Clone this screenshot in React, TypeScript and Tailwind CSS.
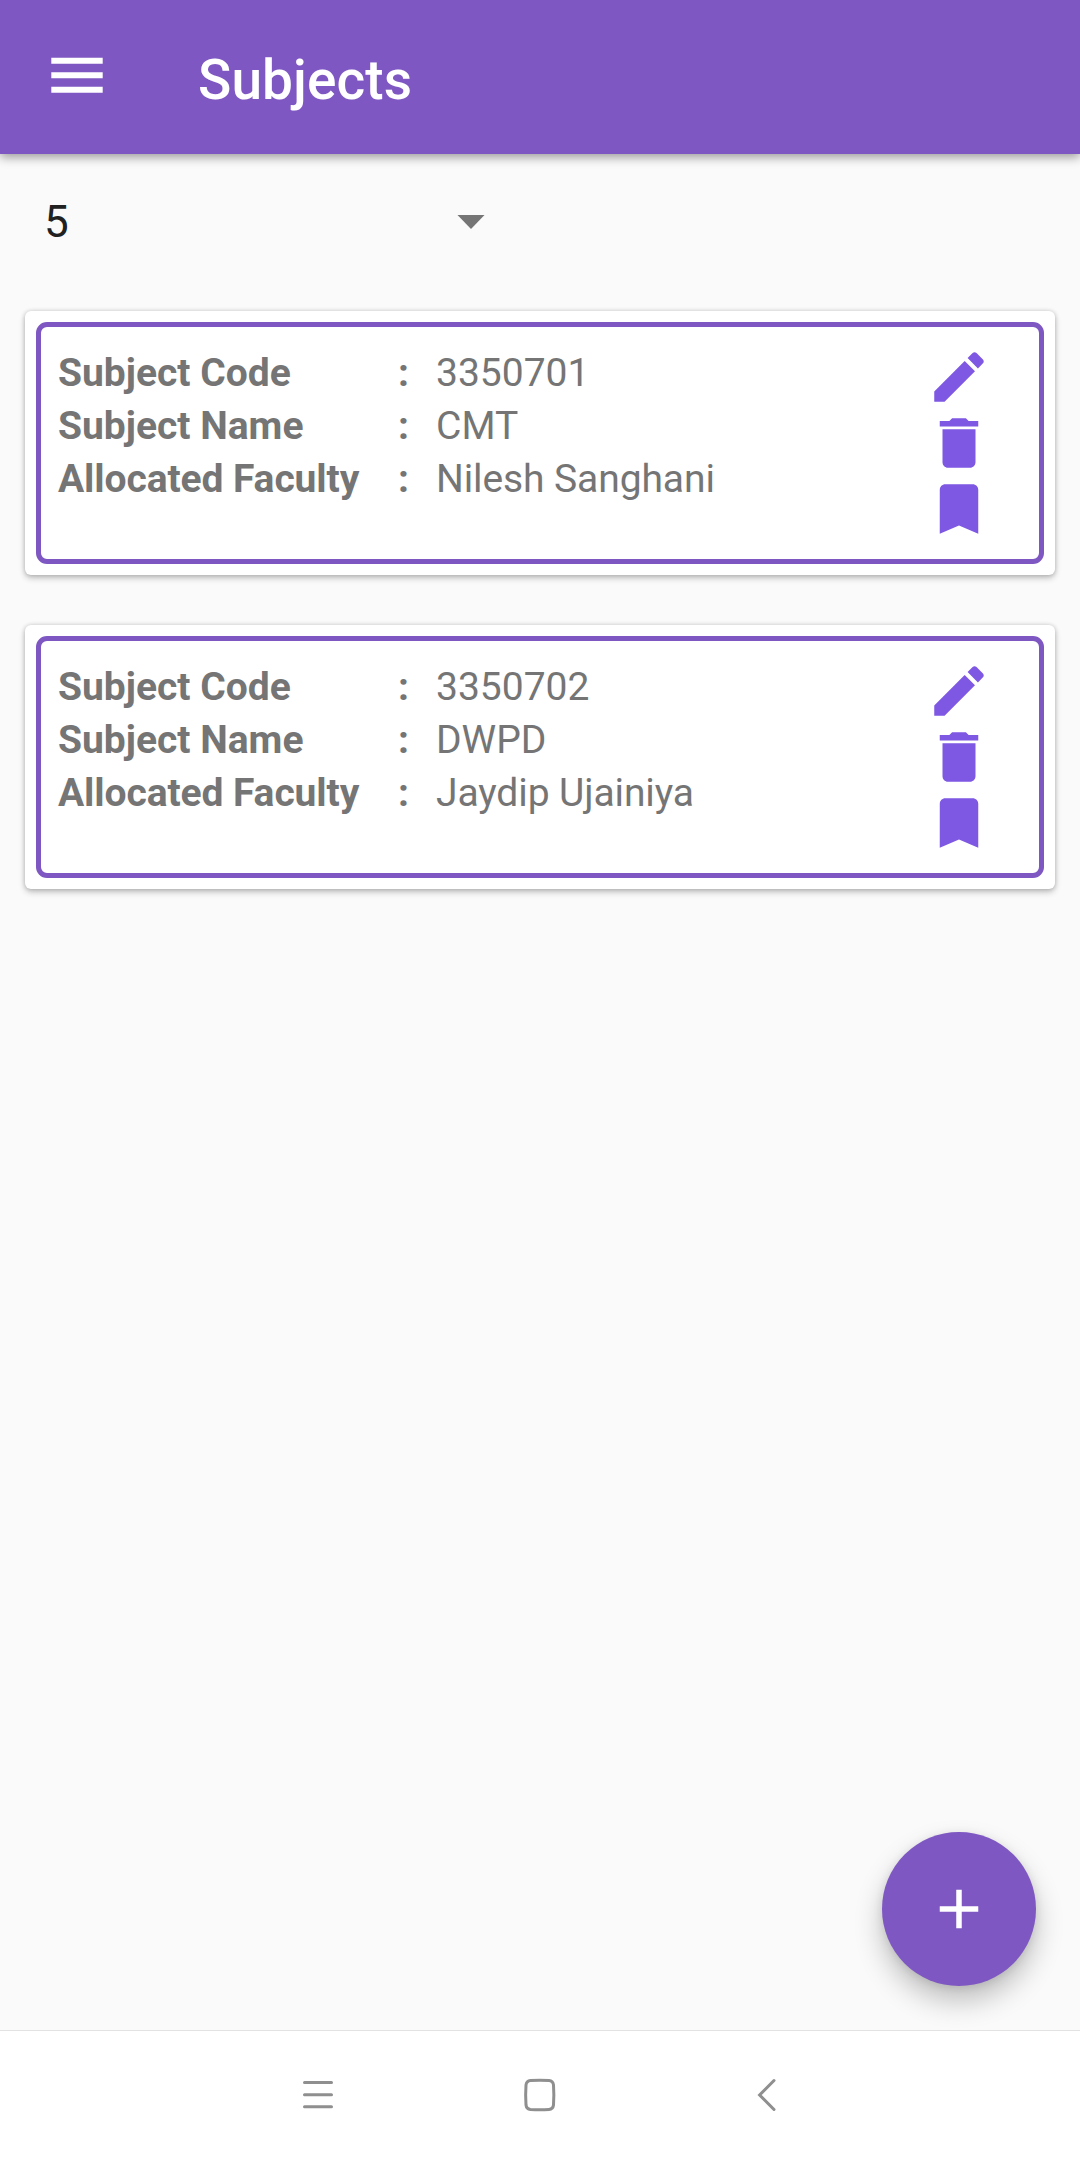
import React from "react";

type Subject = { code: string; name: string; faculty: string };

const subjects: Subject[] = [
  { code: "3350701", name: "CMT", faculty: "Nilesh Sanghani" },
  { code: "3350702", name: "DWPD", faculty: "Jaydip Ujainiya" },
];

const iconPaths = [
  {
    label: "Edit",
    d: "M3 17.25V21h3.75L17.81 9.94l-3.75-3.75L3 17.25zM20.71 7.04c.39-.39.39-1.02 0-1.41l-2.34-2.34c-.39-.39-1.02-.39-1.41 0l-1.83 1.83 3.75 3.75 1.83-1.83z",
  },
  {
    label: "Delete",
    d: "M6 19c0 1.1.9 2 2 2h8c1.1 0 2-.9 2-2V7H6v12zM19 4h-3.5l-1-1h-5l-1 1H5v2h14V4z",
  },
  {
    label: "Bookmark",
    d: "M17 3H7c-1.1 0-1.99.9-1.99 2L5 21l7-3 7 3V5c0-1.1-.9-2-2-2z",
  },
];

function Row({ label, value }: { label: string; value: string }) {
  return (
    <div className="flex h-[53px] items-center whitespace-nowrap">
      <span className="w-[340px] font-bold">{label}</span>
      <span className="w-[38px] font-bold">:</span>
      <span>{value}</span>
    </div>
  );
}

function SubjectCard({ subject }: { subject: Subject }) {
  return (
    <article className="h-[264px] rounded-[6px] bg-white p-[11px] shadow-[0_3px_6px_rgba(0,0,0,0.24),0_0_4px_rgba(0,0,0,0.16)]">
      <div className="flex h-full justify-between rounded-[11px] border-[5px] border-[#7e57c2] pt-[17px] pr-[47px] pl-[17px]">
        <div className="pt-[3px] text-[39px] text-[#757575]">
          <Row label="Subject Code" value={subject.code} />
          <Row label="Subject Name" value={subject.name} />
          <div className="tracking-[-0.1px]">
            <Row label="Allocated Faculty" value={subject.faculty} />
          </div>
        </div>
        <div className="flex flex-col">
          {iconPaths.map((icon) => (
            <button key={icon.label} aria-label={icon.label} className="size-[66px]">
              <svg viewBox="0 0 24 24" className="size-full fill-[#7e57e2]">
                <path d={icon.d} />
              </svg>
            </button>
          ))}
        </div>
      </div>
    </article>
  );
}

export default function App() {
  return (
    <div className="relative flex h-[2160px] w-[1080px] flex-col bg-[#fafafa] font-[Roboto,sans-serif]">
      <header className="flex h-[154px] shrink-0 items-center bg-[#7e57c2] pl-[44px] text-white shadow-[0_3px_10px_rgba(0,0,0,0.4)]">
        <button aria-label="Menu" className="w-[66px]">
          <svg viewBox="0 0 66 66" className="mt-[-5px] size-[66px] fill-white">
            <path d="M7.3 15.7h51.4v6H7.3zM7.3 30.2h51.4v6H7.3zM7.3 44.8h51.4v6H7.3z" />
          </svg>
        </button>
        <h1 className="pt-[6px] pl-[88px] text-[55px] leading-none font-medium tracking-[0.1px]">Subjects</h1>
      </header>

      <main className="flex-1 px-[25px]">
        <div className="flex h-[157px] w-[460px] items-center justify-between pb-[21px] pl-[19px] text-[44px] text-[#212121]">
          <span>5</span>
          <svg viewBox="0 0 28 14" className="h-[14px] w-[28px] fill-[#757575]">
            <path d="M0.5 0h27L14 14z" />
          </svg>
        </div>
        <div className="flex flex-col gap-[50px]">
          {subjects.map((s) => (
            <SubjectCard key={s.code} subject={s} />
          ))}
        </div>
      </main>

      <button
        aria-label="Add subject"
        className="absolute right-[44px] bottom-[174px] flex size-[154px] items-center justify-center rounded-full bg-[#7e57c2] shadow-[0_15px_28px_rgba(0,0,0,0.24),0_2px_10px_rgba(0,0,0,0.1)]"
      >
        <svg viewBox="0 0 24 24" className="size-[66px] fill-white">
          <path d="M19 13h-6v6h-2v-6H5v-2h6V5h2v6h6v2z" />
        </svg>
      </button>

      <nav className="flex h-[130px] shrink-0 justify-center border-t border-[#e2e2e2] bg-white pt-[46px]">
        <div className="flex w-[480px] justify-between">
          <svg viewBox="0 0 36 36" className="size-[36px] fill-none stroke-[#8f8f8f] stroke-3 [stroke-linecap:round]">
            <path d="M4.5 5.5h27M4.5 17.7h27M4.5 29.8h27" />
          </svg>
          <svg viewBox="0 0 36 36" className="size-[36px] fill-none stroke-[#8f8f8f] stroke-3">
            <path d="M8.5 3.6Q18 2.9 27 3.6Q31 4 31.5 8Q32.2 18 31.5 28Q31 32 27 32.4Q18 33.1 8.5 32.4Q4.5 32 4 28Q3.3 18 4 8Q4.5 4 8.5 3.6Z" />
          </svg>
          <svg viewBox="0 0 36 36" className="size-[36px] fill-none stroke-[#8f8f8f] stroke-3 [stroke-linecap:round]">
            <path d="M30 3.5L15.6 18L30 32.5" />
          </svg>
        </div>
      </nav>
    </div>
  );
}
